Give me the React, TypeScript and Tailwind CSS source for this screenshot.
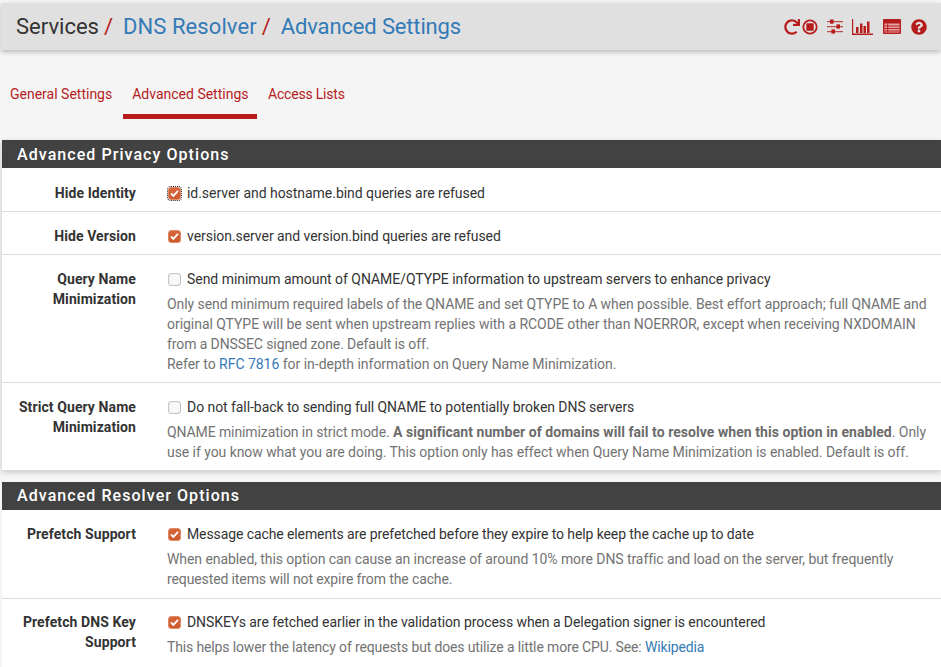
import { FaRedo, FaQuestionCircle } from "react-icons/fa"
import { ReactNode } from "react"

function CheckBox({ checked, focused }: { checked?: boolean; focused?: boolean }) {
  if (!checked) {
    return <span className="block w-[13px] h-[13px] shrink-0 rounded-[3px] border border-[#c4c4c4] bg-[#f8f8f8] shadow-[inset_0_0_1px_rgba(0,0,0,0.25)]" />
  }
  return (
    <span className={`flex items-center justify-center w-[13px] h-[13px] shrink-0 rounded-[3px] border border-[#dd8a66] bg-gradient-to-b from-[#d9663a] to-[#cc5a2e] ${focused ? "outline-1 outline-dotted outline-[#222]" : ""}`}>
      <svg viewBox="0 0 12 12" className="w-[11px] h-[11px] shrink-0">
        <path d="M2.2 6 L4.8 8.6 L9.8 3.2" fill="none" stroke="#fff" strokeWidth="2" />
      </svg>
    </span>
  )
}

function Row({ label, children, className }: { label: ReactNode; children: ReactNode; className: string }) {
  return (
    <div className={`flex border-b border-[#dddddd] last:border-b-0 ${className}`}>
      <div className="w-[134px] shrink-0 text-right font-bold text-[14px] leading-[20px] tracking-[0.09px] text-[#333]">{label}</div>
      <div className="ml-[32px] flex-1 min-w-0">{children}</div>
    </div>
  )
}

function Check({ checked, focused, children, tracking }: { checked?: boolean; focused?: boolean; children: ReactNode; tracking: string }) {
  return (
    <div className="flex items-center h-[20px] text-[14px] text-[#333]">
      <CheckBox checked={checked} focused={focused} />
      <span className={`ml-[6px] whitespace-nowrap ${tracking}`}>{children}</span>
    </div>
  )
}

function Help({ children }: { children: ReactNode }) {
  return <div className="mt-[5px] -ml-[1px] text-[14px] leading-[20px] text-[#737373] whitespace-nowrap">{children}</div>
}

function Heading({ children, leading }: { children: ReactNode; leading: string }) {
  return (
    <div className={`h-[28px] bg-[#424242] pl-[15px] text-[16px] font-medium tracking-[1.06px] text-white ${leading}`}>{children}</div>
  )
}

function StopIcon() {
  return (
    <svg viewBox="0 0 16 16" className="w-[16px] h-[16px]" fill="none">
      <circle cx="8" cy="8" r="6.7" stroke="#b71c1c" strokeWidth="1.8" />
      <rect x="4.3" y="4.3" width="7.4" height="7.4" rx="0.8" fill="#b71c1c" />
    </svg>
  )
}

function SlidersIcon() {
  return (
    <svg viewBox="0 0 16 15" className="w-[16px] h-[15px]" fill="#b71c1c">
      <path d="M0 2h16v1.3H0zM0 7h16v1.3H0zM0 12h16v1.3H0z" opacity="0.75" />
      <rect x="3" y="0.5" width="3.6" height="4.2" />
      <rect x="9.4" y="5.4" width="3.6" height="4.2" />
      <rect x="4.4" y="10.4" width="3.6" height="4.2" />
    </svg>
  )
}

function ChartIcon() {
  return (
    <svg viewBox="0 0 21 16" className="w-[21px] h-[16px]" fill="#b71c1c">
      <path d="M0 0h1.2v14.6H21V16H0z" />
      <path d="M4 8h2.5v6H4zM8 4.5h2.5V14H8zM11.5 7H14v7h-2.5zM15 2.5h2.5V14H15z" />
    </svg>
  )
}

function ListIcon() {
  return (
    <svg viewBox="0 0 18 15" className="w-[18px] h-[15px]">
      <rect width="18" height="15" rx="1" fill="#b71c1c" />
      <path d="M1.5 4.5h15v9h-15z" fill="#e8a5a5" />
      <path d="M1.5 6.4h15v1H1.5zM1.5 9h15v1H1.5zM1.5 11.6h15v1H1.5zM4.2 4.5h1v9h-1z" fill="#b71c1c" />
    </svg>
  )
}

export default function App() {
  return (
    <div className="w-[941px] h-[667px] overflow-hidden bg-[#f5f5f5] font-['Roboto',sans-serif]">
      {/* breadcrumb bar */}
      <div className="h-[51px] pt-[3px] pl-[1px]">
        <div className="h-[47px] flex items-center justify-between bg-[#e0e0e0] pl-[15px] pr-[14px] shadow-[0_2px_5px_rgba(0,0,0,0.25)]">
          <div className="text-[22px] leading-[47px] whitespace-nowrap">
            <span className="text-[#333]">Services</span>
            <span className="text-[#b71c1c] ml-[5px]">/</span>
            <span className="text-[#337ab7] ml-[10px] tracking-[0.08px]">DNS Resolver</span>
            <span className="text-[#b71c1c] ml-[5px]">/</span>
            <span className="text-[#337ab7] ml-[10px] tracking-[-0.15px]">Advanced Settings</span>
          </div>
          <div className="flex items-center text-[#b71c1c]">
            <FaRedo className="w-[16px] h-[16px]" />
            <span className="ml-[2px]"><StopIcon /></span>
            <span className="ml-[9px]"><SlidersIcon /></span>
            <span className="ml-[9px]"><ChartIcon /></span>
            <span className="ml-[10px]"><ListIcon /></span>
            <FaQuestionCircle className="ml-[10px] w-[16px] h-[16px]" />
          </div>
        </div>
      </div>

      {/* tabs */}
      <div className="flex h-[68px] pl-[1px] text-[14px] text-[#b71c1c]">
        <div className="pl-[9px] pr-[11px] pt-[33px]">General Settings</div>
        <div className="h-[68px] pl-[9px] pr-[8.5px] pt-[33px] border-b-[5px] border-[#b71c1c]">Advanced Settings</div>
        <div className="pl-[11px] pt-[33px] tracking-[-0.2px]">Access Lists</div>
      </div>

      <div className="h-[21px]" />

      {/* privacy panel */}
      <div className="ml-[2px] bg-white shadow-[0_2px_6px_rgba(0,0,0,0.2)]">
        <Heading leading="leading-[29px]">Advanced Privacy Options</Heading>
        <Row label="Hide Identity" className="h-[44px] pt-[15px]">
          <Check checked focused tracking="tracking-[-0.04px]">id.server and hostname.bind queries are refused</Check>
        </Row>
        <Row label="Hide Version" className="h-[43px] pt-[14px]">
          <Check checked tracking="tracking-[-0.05px]">version.server and version.bind queries are refused</Check>
        </Row>
        <Row label={<>Query Name<br />Minimization</>} className="h-[128px] pt-[14px]">
          <Check tracking="tracking-[-0.035px]">Send minimum amount of QNAME/QTYPE information to upstream servers to enhance privacy</Check>
          <Help>
            <div className="tracking-[-0.075px]">Only send minimum required labels of the QNAME and set QTYPE to A when possible. Best effort approach; full QNAME and</div>
            <div className="tracking-[-0.04px]">original QTYPE will be sent when upstream replies with a RCODE other than NOERROR, except when receiving NXDOMAIN</div>
            <div className="tracking-[-0.1px]">from a DNSSEC signed zone. Default is off.</div>
            <div className="tracking-[-0.025px]">Refer to <span className="text-[#337ab7]">RFC 7816</span> for in-depth information on Query Name Minimization.</div>
          </Help>
        </Row>
        <Row label={<>Strict Query Name<br />Minimization</>} className="h-[87px] pt-[14px]">
          <Check tracking="tracking-[-0.06px]">Do not fall-back to sending full QNAME to potentially broken DNS servers</Check>
          <Help>
            <div className="tracking-[-0.1px]">QNAME minimization in strict mode. <b className="font-bold text-[#6b6b6b] tracking-[0.05px]">A significant number of domains will fail to resolve when this option in enabled</b><span className="tracking-[-0.04px]">. Only</span></div>
            <div className="tracking-[-0.058px]">use if you know what you are doing. This option only has effect when Query Name Minimization is enabled. Default is off.</div>
          </Help>
        </Row>
      </div>

      <div className="h-[12px]" />

      {/* resolver panel */}
      <div className="ml-[2px] bg-white">
        <Heading leading="leading-[28px]">Advanced Resolver Options</Heading>
        <Row label="Prefetch Support" className="h-[89px] pt-[14px]">
          <Check checked tracking="tracking-[-0.1px]">Message cache elements are prefetched before they expire to help keep the cache up to date</Check>
          <Help>
            <div className="tracking-[-0.075px]">When enabled, this option can cause an increase of around 10% more DNS traffic and load on the server, but frequently</div>
            <div className="tracking-[-0.115px]">requested items will not expire from the cache.</div>
          </Help>
        </Row>
        <Row label={<>Prefetch DNS Key<br />Support</>} className="h-[80px] pt-[13px]">
          <Check checked tracking="tracking-[-0.076px]">DNSKEYs are fetched earlier in the validation process when a Delegation signer is encountered</Check>
          <Help>
            <div className="tracking-[-0.14px]">This helps lower the latency of requests but does utilize a little more CPU. See: <span className="text-[#337ab7]">Wikipedia</span></div>
          </Help>
        </Row>
      </div>
    </div>
  )
}
